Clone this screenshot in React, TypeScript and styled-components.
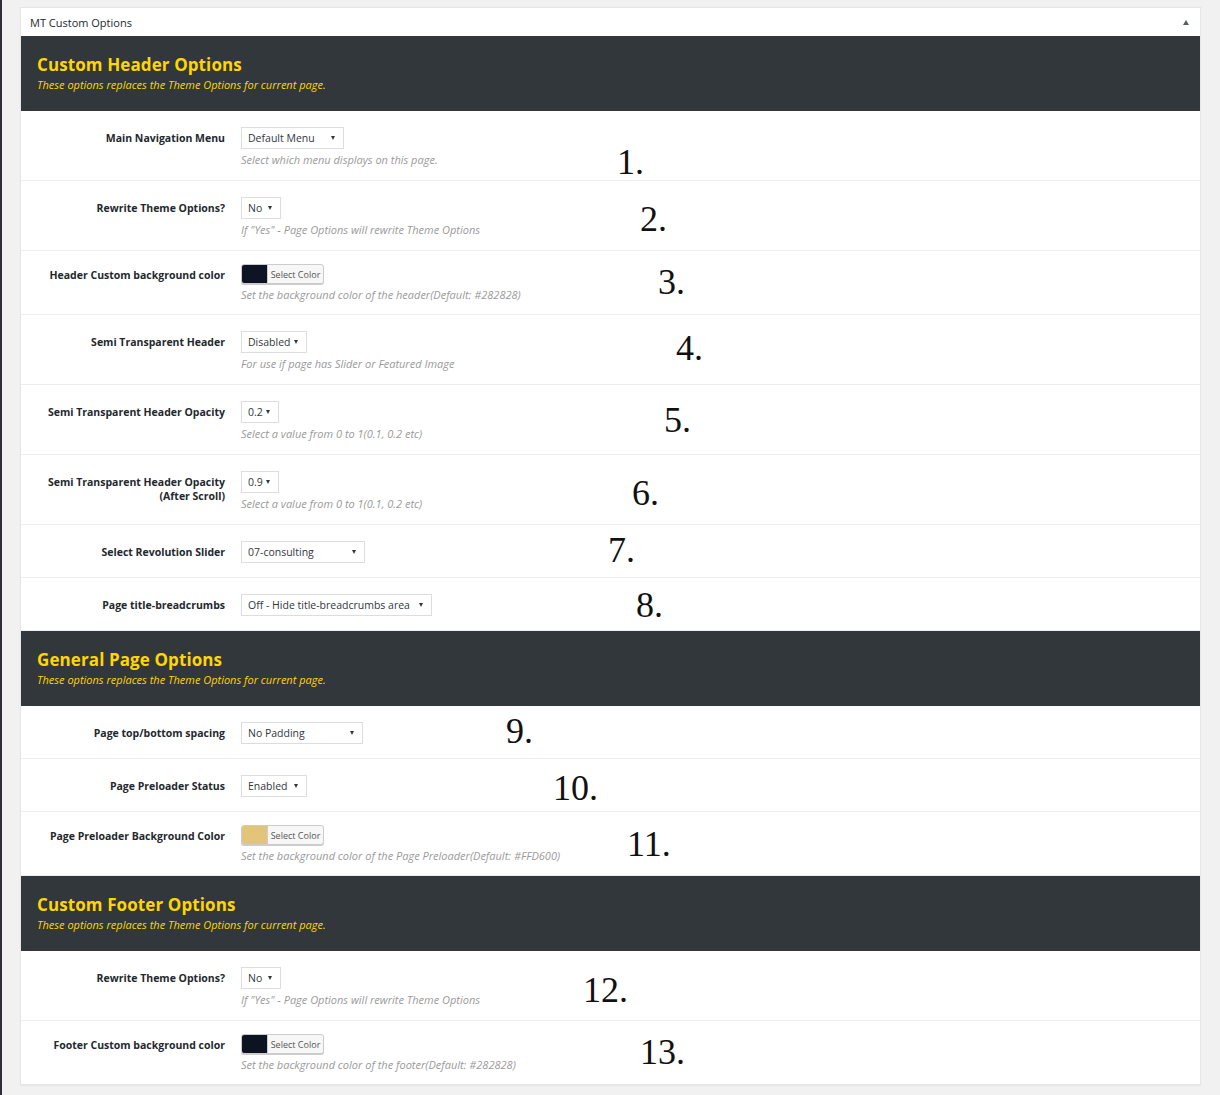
import styled, { createGlobalStyle } from 'styled-components';

const GlobalStyle = createGlobalStyle`
  html, body {
    margin: 0;
    padding: 0;
    background: #f1f1f1;
  }
  * {
    box-sizing: border-box;
  }
`;

type Field = {
  label: string[];
  kind: 'select' | 'color';
  value?: string;
  width?: number;
  swatch?: string;
  desc?: string;
  mark: { n: number; x: number; y: number };
};

type Section = {
  title: string;
  fields: Field[];
};

const SUBTITLE = 'These options replaces the Theme Options for current page.';
const REWRITE_DESC = 'If "Yes" - Page Options will rewrite Theme Options';
const OPACITY_DESC = 'Select a value from 0 to 1(0.1, 0.2 etc)';

const sections: Section[] = [
  {
    title: 'Custom Header Options',
    fields: [
      {
        label: ['Main Navigation Menu'],
        kind: 'select',
        value: 'Default Menu',
        width: 103,
        desc: 'Select which menu displays on this page.',
        mark: { n: 1, x: 596, y: 33 },
      },
      {
        label: ['Rewrite Theme Options?'],
        kind: 'select',
        value: 'No',
        width: 40,
        desc: REWRITE_DESC,
        mark: { n: 2, x: 619, y: 20 },
      },
      {
        label: ['Header Custom background color'],
        kind: 'color',
        swatch: '#0f1424',
        desc: 'Set the background color of the header(Default: #282828)',
        mark: { n: 3, x: 637, y: 13 },
      },
      {
        label: ['Semi Transparent Header'],
        kind: 'select',
        value: 'Disabled',
        width: 66,
        desc: 'For use if page has Slider or Featured Image',
        mark: { n: 4, x: 655, y: 15 },
      },
      {
        label: ['Semi Transparent Header Opacity'],
        kind: 'select',
        value: '0.2',
        width: 38,
        desc: OPACITY_DESC,
        mark: { n: 5, x: 643, y: 17 },
      },
      {
        label: ['Semi Transparent Header Opacity', '(After Scroll)'],
        kind: 'select',
        value: '0.9',
        width: 38,
        desc: OPACITY_DESC,
        mark: { n: 6, x: 611, y: 20 },
      },
      {
        label: ['Select Revolution Slider'],
        kind: 'select',
        value: '07-consulting',
        width: 124,
        mark: { n: 7, x: 587, y: 7 },
      },
      {
        label: ['Page title-breadcrumbs'],
        kind: 'select',
        value: 'Off - Hide title-breadcrumbs area',
        width: 191,
        mark: { n: 8, x: 615, y: 9 },
      },
    ],
  },
  {
    title: 'General Page Options',
    fields: [
      {
        label: ['Page top/bottom spacing'],
        kind: 'select',
        value: 'No Padding',
        width: 122,
        mark: { n: 9, x: 485, y: 7 },
      },
      {
        label: ['Page Preloader Status'],
        kind: 'select',
        value: 'Enabled',
        width: 66,
        mark: { n: 10, x: 532, y: 11 },
      },
      {
        label: ['Page Preloader Background Color'],
        kind: 'color',
        swatch: '#e3c47b',
        desc: 'Set the background color of the Page Preloader(Default: #FFD600)',
        mark: { n: 11, x: 606, y: 14 },
      },
    ],
  },
  {
    title: 'Custom Footer Options',
    fields: [
      {
        label: ['Rewrite Theme Options?'],
        kind: 'select',
        value: 'No',
        width: 40,
        desc: REWRITE_DESC,
        mark: { n: 12, x: 562, y: 21 },
      },
      {
        label: ['Footer Custom background color'],
        kind: 'color',
        swatch: '#0e1322',
        desc: 'Set the background color of the footer(Default: #282828)',
        mark: { n: 13, x: 619, y: 13 },
      },
    ],
  },
];

function OptionRow({ field }: { field: Field }) {
  const compact = field.kind === 'color';
  return (
    <Row $compact={compact}>
      <Label>
        {field.label.map((line) => (
          <span key={line}>{line}</span>
        ))}
      </Label>
      <Control>
        {field.kind === 'select' ? (
          <SelectBox style={{ width: field.width }}>{field.value}</SelectBox>
        ) : (
          <ColorButton>
            <Swatch $color={field.swatch!} />
            <ColorText>Select Color</ColorText>
          </ColorButton>
        )}
        {field.desc && <Description>{field.desc}</Description>}
      </Control>
      <Annotation style={{ left: field.mark.x, top: field.mark.y }}>
        {field.mark.n}.
      </Annotation>
    </Row>
  );
}

export default function App() {
  return (
    <Page>
      <GlobalStyle />
      <Panel>
        <PanelHeader>
          <span>MT Custom Options</span>
          <Toggle />
        </PanelHeader>
        {sections.map((section) => (
          <div key={section.title}>
            <SectionHead>
              <SectionTitle>{section.title}</SectionTitle>
              <SectionSub>{SUBTITLE}</SectionSub>
            </SectionHead>
            {section.fields.map((field) => (
              <OptionRow key={field.mark.n} field={field} />
            ))}
          </div>
        ))}
      </Panel>
    </Page>
  );
}

const Page = styled.div`
  min-height: 1095px;
  padding: 7px 19px 10px 18px;
  border-left: 2px solid #2c3034;
  background: #f1f1f1;
  font-family: 'Open Sans', 'Noto Sans', sans-serif;
`;

const Panel = styled.div`
  background: #fff;
  border: 1px solid #e5e5e5;
  box-shadow: 0 1px 1px rgba(0, 0, 0, 0.04);

  & > div:last-child > div:last-child {
    border-bottom: none;
  }
`;

const PanelHeader = styled.div`
  height: 28px;
  display: flex;
  align-items: center;
  justify-content: space-between;
  padding: 0 11px 0 9px;
  font-size: 11px;
  color: #23282d;
`;

const Toggle = styled.span`
  width: 0;
  height: 0;
  border-left: 3px solid transparent;
  border-right: 3px solid transparent;
  border-bottom: 5px solid #555d66;
`;

const SectionHead = styled.div`
  background: #32373c;
  padding: 18px 16px 17px;
  color: #ffd600;
`;

const SectionTitle = styled.h2`
  margin: 0;
  font-size: 17px;
  line-height: 22px;
  font-weight: 700;
  letter-spacing: 0.1px;
`;

const SectionSub = styled.div`
  font-size: 11px;
  line-height: 18px;
  font-style: italic;
`;

const Row = styled.div<{ $compact: boolean }>`
  position: relative;
  display: grid;
  grid-template-columns: 204px 1fr;
  column-gap: 16px;
  padding: ${({ $compact }) => ($compact ? '13px 0 13px' : '16px 0 14px')};
  border-bottom: 1px solid #eeeeee;
`;

const Label = styled.div`
  display: flex;
  flex-direction: column;
  align-items: flex-end;
  padding-top: 4px;
  font-size: 10.5px;
  line-height: 14px;
  font-weight: 700;
  color: #23282d;
  text-align: right;
`;

const Control = styled.div`
  display: flex;
  flex-direction: column;
  align-items: flex-start;
`;

const SelectBox = styled.div`
  position: relative;
  height: 22px;
  display: flex;
  align-items: center;
  padding: 0 6px;
  border: 1px solid #dddddd;
  background: #fff;
  font-size: 10.5px;
  color: #32373c;
  white-space: nowrap;

  &::after {
    content: '';
    position: absolute;
    right: 8px;
    top: 8px;
    border-left: 2.5px solid transparent;
    border-right: 2.5px solid transparent;
    border-top: 4px solid #32373c;
  }
`;

const ColorButton = styled.div`
  display: flex;
  height: 20px;
  width: 83px;
  border: 1px solid #cccccc;
  border-radius: 3px;
  overflow: hidden;
  box-shadow: 0 1px 0 #cccccc;
  background: #f7f7f7;
`;

const Swatch = styled.span<{ $color: string }>`
  width: 25px;
  background: ${({ $color }) => $color};
`;

const ColorText = styled.span`
  flex: 1;
  display: flex;
  align-items: center;
  justify-content: center;
  border-left: 1px solid #cccccc;
  font-size: 9px;
  color: #555555;
`;

const Description = styled.div`
  margin-top: 4px;
  font-size: 11px;
  line-height: 13px;
  font-style: italic;
  color: #9a9a9a;
`;

const Annotation = styled.span`
  position: absolute;
  font-family: 'Liberation Serif', 'Times New Roman', serif;
  font-size: 36px;
  line-height: 36px;
  color: #111;
`;
